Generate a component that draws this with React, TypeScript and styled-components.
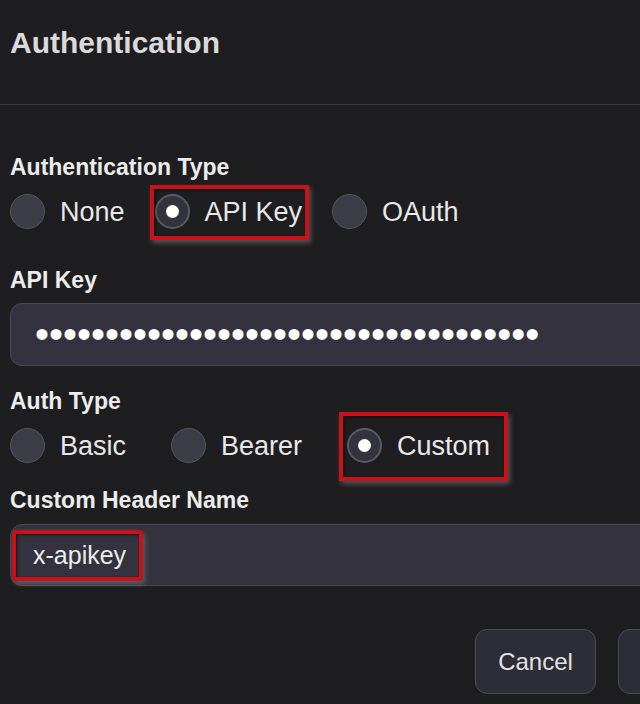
import React from "react";
import styled, { createGlobalStyle, css } from "styled-components";

const GlobalStyle = createGlobalStyle`
   html, body {
      margin: 0;
      padding: 0;
      background: #1e1e20;
      overflow: hidden;
   }

   body {
      font-family: "Liberation Sans", Arial, sans-serif;
      color: #e6e6e6;
   }
`;

const Dialog = styled.div`
   width: 768px;
   height: 704px;
   background: #1e1e20;
`;

const Header = styled.header`
   box-sizing: border-box;
   height: 105px;
   padding: 26px 10px 0;
   border-bottom: 1px solid #3a3a3d;
`;

const Title = styled.h2`
   margin: 0;
   font-size: 30px;
   line-height: 34px;
   font-weight: 700;
   color: #dadadc;
`;

const Body = styled.div`
   padding: 48px 10px 0;
`;

const Field = styled.div<{ $top?: number }>`
   margin-top: ${(p) => p.$top ?? 0}px;
`;

const Label = styled.label`
   display: block;
   font-size: 23px;
   line-height: 28px;
   font-weight: 700;
   color: #ececec;
`;

const RadioRow = styled.div<{ $gap: number }>`
   display: flex;
   align-items: center;
   gap: ${(p) => p.$gap}px;
   height: 36px;
   margin-top: 12px;
`;

type Frame = [number, number, number, number];

const frameCss = css`
   position: absolute;
   content: "";
   border: 4px solid #c8121b;
   box-shadow: 2px 3px 5px rgba(150, 150, 150, 0.45),
      inset 1px 1px 3px rgba(0, 0, 0, 0.6);
   pointer-events: none;
`;

const RadioOption = styled.label<{ $frame?: Frame }>`
   position: relative;
   display: flex;
   align-items: center;
   gap: 15px;
   height: 36px;
   cursor: pointer;

   ${(p) =>
      p.$frame &&
      css`
         &::after {
            ${frameCss};
            top: ${p.$frame[0]}px;
            right: ${p.$frame[1]}px;
            bottom: ${p.$frame[2]}px;
            left: ${p.$frame[3]}px;
         }
      `}
`;

const RadioDot = styled.span<{ $checked?: boolean }>`
   box-sizing: border-box;
   display: flex;
   align-items: center;
   justify-content: center;
   width: 35px;
   height: 35px;
   border-radius: 50%;
   background: #3d3d47;
   border: 1.5px solid #54545e;

   ${(p) =>
      p.$checked &&
      css`
         background: #33333d;
         border: 2px solid #5a5a64;

         &::before {
            content: "";
            width: 13px;
            height: 13px;
            border-radius: 50%;
            background: #ffffff;
         }
      `}
`;

const RadioText = styled.span`
   font-size: 27px;
   line-height: 35px;
   padding-top: 3px;
   color: #e8e8e8;
`;

const InputShell = styled.div<{ $top: number }>`
   position: relative;
   margin-top: ${(p) => p.$top}px;
`;

const TextInput = styled.input<{ $secret?: boolean; $height: number }>`
   display: block;
   box-sizing: border-box;
   width: 100%;
   height: ${(p) => p.$height}px;
   padding: 0 0 0 22px;
   background: #33323e;
   border: 1.5px solid #4a4a54;
   border-radius: 12px;
   color: #ececec;
   font-family: inherit;
   font-size: 25px;
   outline: none;

   ${(p) =>
      p.$secret &&
      css`
         padding-left: 24px;
         font-size: 40px;
         color: #ffffff;
      `}
`;

const Highlight = styled.span`
   ${frameCss};
   top: 6px;
   left: 2px;
   width: 131px;
   height: 51px;
   box-sizing: border-box;
   border-radius: 4px;
`;

const Footer = styled.div`
   display: flex;
   justify-content: flex-end;
   gap: 22px;
   margin-top: 43px;
`;

const Button = styled.button<{ $width: number }>`
   box-sizing: border-box;
   width: ${(p) => p.$width}px;
   height: 65px;
   background: #2d2d37;
   border: 1.5px solid #4b4b55;
   border-radius: 12px;
   color: #e2e2e4;
   font-family: inherit;
   font-size: 24px;
   cursor: pointer;
`;

interface Option {
   label: string;
   checked?: boolean;
   frame?: Frame;
}

const RadioGroup: React.FC<{ name: string; gap: number; options: Option[] }> = ({
   name,
   gap,
   options,
}) => (
   <RadioRow $gap={gap} role="radiogroup">
      {options.map((o) => (
         <RadioOption key={o.label} $frame={o.frame}>
            <RadioDot $checked={o.checked} aria-hidden />
            <RadioText>{o.label}</RadioText>
            <input type="radio" name={name} defaultChecked={o.checked} hidden />
         </RadioOption>
      ))}
   </RadioRow>
);

const App: React.FC = () => {
   return (
      <Dialog>
         <GlobalStyle />
         <Header>
            <Title>Authentication</Title>
         </Header>
         <Body>
            <Field>
               <Label>Authentication Type</Label>
               <RadioGroup
                  name="authType"
                  gap={30}
                  options={[
                     { label: "None" },
                     { label: "API Key", checked: true, frame: [-8, -7, -11, -5] },
                     { label: "OAuth" },
                  ]}
               />
            </Field>

            <Field $top={37}>
               <Label htmlFor="apiKey">API Key</Label>
               <InputShell $top={9}>
                  <TextInput
                     id="apiKey"
                     type="password"
                     $secret
                     $height={63}
                     readOnly
                     value={"x".repeat(36)}
                  />
               </InputShell>
            </Field>

            <Field $top={21}>
               <Label>Auth Type</Label>
               <RadioGroup
                  name="keyType"
                  gap={45}
                  options={[
                     { label: "Basic" },
                     { label: "Bearer" },
                     { label: "Custom", checked: true, frame: [-15, -18, -18, -8] },
                  ]}
               />
            </Field>

            <Field $top={23}>
               <Label htmlFor="headerName">Custom Header Name</Label>
               <InputShell $top={10}>
                  <TextInput id="headerName" $height={62} readOnly value="x-apikey" />
                  <Highlight />
               </InputShell>
            </Field>

            <Footer>
               <Button $width={121}>Cancel</Button>
               <Button $width={140}>Save</Button>
            </Footer>
         </Body>
      </Dialog>
   );
};

export default App;
